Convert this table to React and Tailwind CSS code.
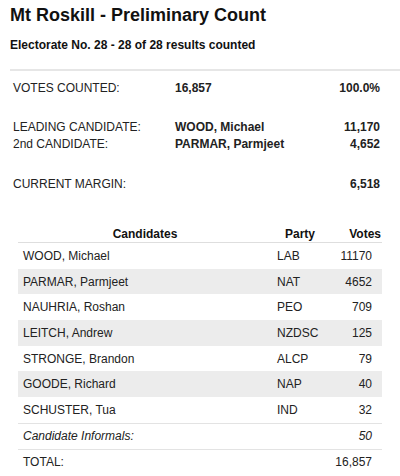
const rows = [
  { name: "WOOD, Michael", party: "LAB", votes: "11170" },
  { name: "PARMAR, Parmjeet", party: "NAT", votes: "4652" },
  { name: "NAUHRIA, Roshan", party: "PEO", votes: "709" },
  { name: "LEITCH, Andrew", party: "NZDSC", votes: "125" },
  { name: "STRONGE, Brandon", party: "ALCP", votes: "79" },
  { name: "GOODE, Richard", party: "NAP", votes: "40" },
  { name: "SCHUSTER, Tua", party: "IND", votes: "32" },
]

const SummaryRow = ({ label, value, right, className = "" }) => (
  <div className={`flex items-center ml-[13px] w-[367px] leading-[17px] ${className}`}>
    <div className="w-[162px]">{label}</div>
    <div className="flex-1 font-bold">{value}</div>
    <div className="font-bold text-right">{right}</div>
  </div>
)

const App = () => {
  return (
    <div className="w-[400px] h-[476px] overflow-hidden bg-white text-[#222] text-[12px] font-['Liberation_Sans',Arial,sans-serif]">
      <h1 className="pl-[10px] h-[30px] leading-[30px] text-[18px] font-bold text-[#111]">
        Mt Roskill - Preliminary Count
      </h1>
      <h2 className="pl-[10px] h-[30px] leading-[30px] text-[12px] font-bold text-[#111]">
        Electorate No. 28 - 28 of 28 results counted
      </h2>
      <div className="mt-[9px] ml-[10px] h-[2px] bg-[#e6e6e6]"></div>

      <SummaryRow className="mt-[9px]" label="VOTES COUNTED:" value="16,857" right="100.0%" />
      <SummaryRow className="mt-[22px]" label="LEADING CANDIDATE:" value="WOOD, Michael" right="11,170" />
      <SummaryRow label="2nd CANDIDATE:" value="PARMAR, Parmjeet" right="4,652" />
      <SummaryRow className="mt-[23px]" label="CURRENT MARGIN:" value="" right="6,518" />

      <div className="mt-[29px] ml-[18px] w-[364px]">
        <div className="flex items-end h-[20px] leading-[16px] font-bold text-[#111]">
          <div className="flex-1 text-center">Candidates</div>
          <div className="w-[56px] text-center">Party</div>
          <div className="w-[54px] text-right pr-[1px]">Votes</div>
        </div>
        <div className="h-px bg-[#dedede]"></div>
        {rows.map((r, i) => (
          <div
            key={r.name}
            className={`flex items-center h-[25.7px] ${i % 2 === 1 ? "bg-[#ececec]" : ""}`}
          >
            <div className="flex-1 pl-[5px]">{r.name}</div>
            <div className="w-[56px] pl-[5px]">{r.party}</div>
            <div className="w-[54px] text-right pr-[10px]">{r.votes}</div>
          </div>
        ))}
        <div className="h-px bg-[#e3e3e3]"></div>
        <div className="flex items-center h-[25px] italic">
          <div className="flex-1 pl-[5px]">Candidate Informals:</div>
          <div className="w-[54px] text-right pr-[10px]">50</div>
        </div>
        <div className="h-px bg-[#e3e3e3]"></div>
        <div className="flex items-center h-[25px]">
          <div className="flex-1 pl-[5px]">TOTAL:</div>
          <div className="w-[80px] text-right pr-[10px]">16,857</div>
        </div>
      </div>
    </div>
  )
}

export default App
